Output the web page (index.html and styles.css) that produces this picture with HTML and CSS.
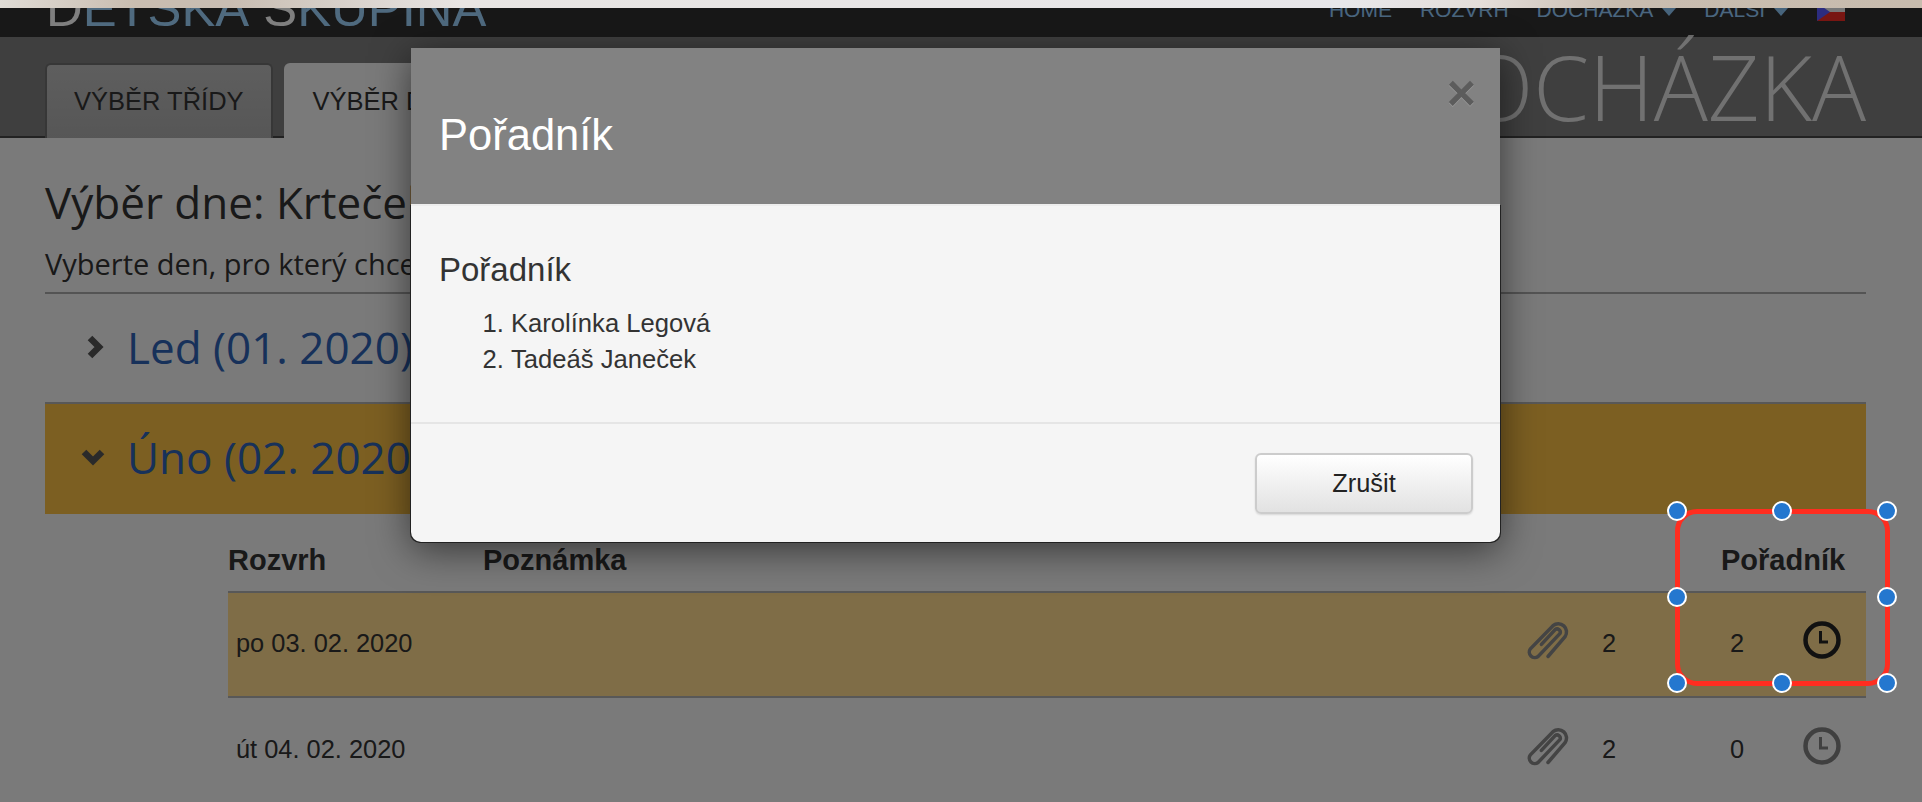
FILE: index.html
```html
<!DOCTYPE html>
<html lang="cs">
<head>
<meta charset="utf-8">
<title>Docházka</title>
<link rel="stylesheet" href="styles.css">
</head>
<body>
<div class="strip"></div>
<div class="viewport">
  <header class="navbar">
    <div class="brand"><span class="brand-hi">D</span>ĚTSKÁ <span class="brand-hi">S</span>KUPINA</div>
    <nav class="nav">
      <span>HOME</span>
      <span>ROZVRH</span>
      <span class="drop">DOCHÁZKA<i class="caret"></i></span>
      <span class="drop">DALŠÍ<i class="caret"></i></span>
      <svg class="flag" viewBox="0 0 28 18" width="28" height="18"><rect width="28" height="9" fill="#f0f0f0"/><rect y="9" width="28" height="9" fill="#f02c24"/><path d="M0 0L13 9L0 18Z" fill="#5858ff"/></svg>
    </nav>
  </header>
  <section class="subhead">
    <div class="tabs">
      <div class="tab">VÝBĚR TŘÍDY</div>
      <div class="tab tab-active">VÝBĚR DNE</div>
    </div>
    <h1 class="page-title">DOCHÁZKA</h1>
  </section>
  <main class="content">
    <h2 class="title">Výběr dne: Krteček</h2>
    <p class="lead">Vyberte den, pro který chcete zobrazit docházku.</p>
    <div class="month">
      <svg class="chev chev-r" width="18" height="24" viewBox="0 0 18 24"><path d="M4 3L13 12L4 21" /></svg>
      <span class="month-name">Led (01. 2020)</span>
    </div>
    <div class="month month-open">
      <svg class="chev chev-d" width="24" height="18" viewBox="0 0 24 18"><path d="M3 4L12 13L21 4" /></svg>
      <span class="month-name">Úno (02. 2020)</span>
    </div>
    <div class="table">
      <div class="row row-head">
        <div class="c-date">Rozvrh</div>
        <div class="c-note">Poznámka</div>
        <div class="c-order">Pořadník</div>
      </div>
      <div class="row row-hl">
        <div class="c-date pad">po 03. 02. 2020</div>
        <div class="c-note"></div>
        <svg class="clip" width="44" height="40" viewBox="0 0 40 36"><path d="M20 33L35.5 15A7.5 7.5 0 0 0 24.5 5L4 26A5 5 0 0 0 11 33L31 12A3 3 0 0 0 26.5 8.5L14 22"/></svg>
        <div class="num">2</div>
        <div class="gap"></div>
        <div class="num">2</div>
        <svg class="clock clock-on" width="38" height="38" viewBox="0 0 38 38"><circle cx="19" cy="19" r="16.5"/><path class="hands" d="M17.5 10V21H25"/></svg>
      </div>
      <div class="row">
        <div class="c-date pad">út 04. 02. 2020</div>
        <div class="c-note"></div>
        <svg class="clip" width="44" height="40" viewBox="0 0 40 36"><path d="M20 33L35.5 15A7.5 7.5 0 0 0 24.5 5L4 26A5 5 0 0 0 11 33L31 12A3 3 0 0 0 26.5 8.5L14 22"/></svg>
        <div class="num">2</div>
        <div class="gap"></div>
        <div class="num">0</div>
        <svg class="clock" width="38" height="38" viewBox="0 0 38 38"><circle cx="19" cy="19" r="16.5"/><path class="hands" d="M17.5 10V21H25"/></svg>
      </div>
    </div>
  </main>
  <div class="backdrop"></div>
  <div class="modal">
    <div class="modal-head">
      <span class="close">×</span>
      <h3 class="modal-title">Pořadník</h3>
    </div>
    <div class="modal-main">
      <div class="modal-body">
        <h4 class="modal-sub">Pořadník</h4>
        <ol class="modal-list">
          <li>Karolínka Legová</li>
          <li>Tadeáš Janeček</li>
        </ol>
      </div>
      <div class="modal-foot"><button class="btn">Zrušit</button></div>
    </div>
  </div>
  <div class="marker">
    <i class="h h1"></i><i class="h h2"></i><i class="h h3"></i>
    <i class="h h4"></i><i class="h h5"></i>
    <i class="h h6"></i><i class="h h7"></i><i class="h h8"></i>
  </div>
</div>
</body>
</html>
```
FILE: styles.css
```css
* { box-sizing: border-box; }
html, body { margin: 0; height: 802px; overflow: hidden; background: #f5f5f5; }
body { font-family: "Liberation Sans", Arial, sans-serif; color: #333; }

.strip {
  height: 8px;
  background: linear-gradient(90deg, #e0dcd6 0, #c9bdb0 7%, #c9bdb2 12%, #e8e5e3 24%, #e8e7ea 70%, #e4deda 77%, #c9bdb0 84%, #c8bcae 100%);
}
.viewport { position: relative; height: 794px; overflow: hidden; background: #f5f5f5; }

.navbar {
  height: 29px;
  background: #303030;
  display: flex;
  justify-content: space-between;
  align-items: flex-end;
  padding: 0 77px 0 46px;
  overflow: hidden;
  position: relative;
}
.brand { font-size: 50.8px; line-height: 50px; color: #9ed4ff; white-space: nowrap; height: 50px; margin-bottom: 3px; flex: none; }
.brand-hi { color: #ffffff; }
.nav { display: flex; align-items: flex-end; gap: 28px; font-size: 21px; line-height: 22px; color: #94ccff; margin-bottom: 16px; }
.drop { display: flex; align-items: center; }
.caret { display: block; width: 0; height: 0; border: 7px solid transparent; border-top: 8px solid #8fc8f8; border-bottom: 0; margin-left: 9px; margin-top: 4px; }
.flag { display: block; margin: 0 0 0 1px; }

.subhead {
  height: 101px;
  background: #7e7e7e;
  display: flex;
  justify-content: space-between;
  align-items: flex-end;
  padding: 0 56px 0 45px;
  border-bottom: 2px solid #444;
  position: relative;
}
.tabs { display: flex; gap: 11px; margin-bottom: -2px; }
.tab {
  height: 75px;
  padding: 0 27px;
  background: linear-gradient(#bdbdbd, #adadad);
  border: 2px solid #6e6e6e;
  border-bottom: 0;
  border-radius: 6px 6px 0 0;
  font-size: 25.5px;
  line-height: 73px;
  text-align: center;
  color: #333;
}
.tab-active { background: #f5f5f5; border-color: #f5f5f5; }
.page-title {
  margin: 0 0 5px;
  font: 300 90px/90px "Open Sans", sans-serif;
  color: #fff;
  opacity: .78;
}

.content { padding: 0 56px 0 45px; }
.title { margin: 34px 0 0; font: 400 44px/60px "Open Sans", sans-serif; color: #333; }
.lead { margin: 0; padding: 12px 0 8px; font: 400 29px/40px "Open Sans", sans-serif; color: #333; border-bottom: 2px solid #a8a8a8; }
.month { height: 110px; display: flex; align-items: center; border-bottom: 2px solid #b0b0b0; padding-left: 36px; position: relative; }
.month-open { border-bottom: 0; background: #f8be44; }
.month-name { position: absolute; left: 82px; top: 18px; font: 400 44px/70px "Open Sans", sans-serif; color: #2e62b4; white-space: nowrap; }
.chev { fill: none; stroke: #555; stroke-width: 6.5; display: block; }
.chev-r { margin-left: 5px; margin-top: -2px; }
.chev-d { margin-top: -4px; }

.table { margin-left: 183px; }
.row {
  display: grid;
  grid-template-columns: 255px 1037px 56px 66px 48px 94px 76px 6px;
  height: 105px;
  padding-bottom: 2px;
  align-items: center;
  border-bottom: 2px solid #b0b0b0;
  font-size: 25.4px;
  color: #333;
}
.row-head { height: 79px; font-size: 29px; font-weight: 700; align-items: end; padding-bottom: 14px; }
.row-hl { background: #ffdb8e; }
.row:last-child { border-bottom: 0; }
.pad { padding-left: 8px; }
.c-order { grid-column: 6 / 8; padding-left: 31px; white-space: nowrap; }
.num { text-align: center; }
.clip { fill: none; stroke: #888; stroke-width: 3.2; stroke-linecap: round; justify-self: center; margin-top: -8px; }
.clock { fill: none; stroke: #808080; stroke-width: 4.5; justify-self: center; margin-top: -7px; }
.clock-on { stroke: #222; }
.hands { stroke-width: 3; }

.backdrop { position: absolute; inset: 0; background: rgba(0,0,0,.5); }

.modal {
  position: absolute;
  left: 411px;
  top: 40px;
  width: 1089px;
  height: 493.5px;
  border-radius: 0 0 10px 10px;
  box-shadow: 0 8px 38px rgba(0,0,0,.55);
  display: flex;
  flex-direction: column;
}
.modal-head { height: 156px; background: #828282; position: relative; padding: 0 28px; }
.modal-title { margin: 0; padding-top: 58px; font-size: 43.5px; line-height: 58px; font-weight: 400; color: #fff; }
.close { position: absolute; right: 24px; top: 20px; font-size: 50px; line-height: 50px; font-weight: 700; color: #5c5c5c; text-shadow: 0 1px 0 #999; }
.modal-main { flex: 1; background: #f5f5f5; border-top: 2px solid #ededed; border-radius: 0 0 10px 10px; box-shadow: -1px 1px 0 #222, 1px 1px 0 #222; display: flex; flex-direction: column; }
.modal-body { height: 218px; padding: 0 28px; border-bottom: 2px solid #e5e5e5; }
.modal-sub { margin: 0; padding-top: 44px; font-size: 33px; line-height: 40px; font-weight: 400; color: #333; }
.modal-list { margin: 15px 0 0; padding-left: 72px; font-size: 25.6px; line-height: 36px; color: #333; }
.modal-foot { flex: 1; display: flex; justify-content: flex-end; align-items: flex-start; padding: 29px 27px 0; }
.btn {
  width: 218px;
  height: 61px;
  border: 2px solid #ccc;
  border-radius: 6px;
  background: linear-gradient(#fff, #e2e2e2);
  box-shadow: 0 1px 2px rgba(0,0,0,.12);
  font: 400 25.4px "Liberation Sans", sans-serif;
  color: #222;
}

.marker {
  position: absolute;
  left: 1674.5px;
  top: 500.5px;
  width: 215px;
  height: 177px;
  border: 5px solid #ff2d20;
  border-radius: 22px;
}
.h { position: absolute; width: 20px; height: 20px; background: #2477cf; border: 2px solid #fff; border-radius: 50%; transform: translate(-50%, -50%); }
.h1, .h4, .h6 { left: -2.5px; }
.h2, .h7 { left: 50%; }
.h3, .h5, .h8 { left: calc(100% + 2.5px); }
.h1, .h2, .h3 { top: -2.5px; }
.h4, .h5 { top: 50%; }
.h6, .h7, .h8 { top: calc(100% + 2.5px); }
```
